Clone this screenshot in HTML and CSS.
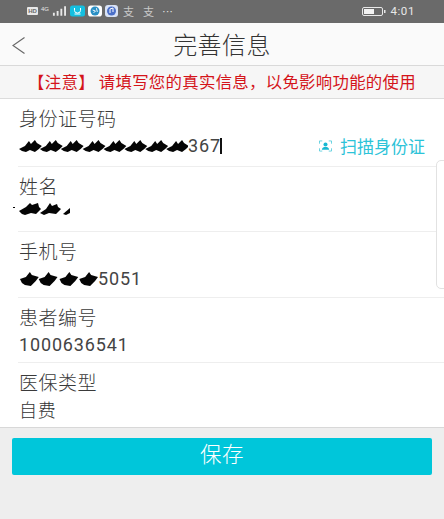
FILE: index.html
```html
<!DOCTYPE html>
<html lang="zh-CN">
<head>
<meta charset="utf-8">
<title>完善信息</title>
<link rel="stylesheet" href="styles.css">
</head>
<body>
<div class="screen">
  <div class="status">
    <div class="status-left">
      <span class="hd">HD</span>
      <span class="net">4G</span>
      <svg class="signal" width="14" height="10" viewBox="0 0 15 10"><path d="M1 7h2v3H1zM5 5h2v5H5zM9 2.500h2V10H9zM13 0h2v10h-2z" fill="#e8e8e8"/></svg>
      <svg class="app" width="15" height="12" viewBox="0 0 15 12"><rect width="15" height="11" y=".5" rx="2.500" fill="#14bfe0"/><path d="M4.500 3v2.500a3 2.500 0 0 0 6 0V3M4.500 9h6" stroke="#fff" stroke-width="1" fill="none"/></svg>
      <svg class="app" width="14" height="12" viewBox="0 0 15 12"><rect width="15" height="12" rx="3" fill="#fff"/><circle cx="7.500" cy="6" r="4.800" fill="#2a8fc4"/><path d="M5 5l3 1-2 2M9 3l1 4" stroke="#fff" stroke-width="1" fill="none"/></svg>
      <svg class="app" width="13" height="12" viewBox="0 0 13 12"><rect width="13" height="12" rx="3" fill="#d9e2f5"/><circle cx="6.500" cy="6" r="4.500" fill="#4a6fc8"/><path d="M5 8V4l3-1v4" stroke="#fff" stroke-width="1" fill="none"/></svg>
      <span class="mini">支</span>
      <span class="mini">支</span>
      <span class="dots">···</span>
    </div>
    <div class="status-right">
      <svg width="24" height="9" viewBox="0 0 24 9"><rect x=".5" y=".5" width="20" height="8" rx="1.500" fill="none" stroke="#e8e8e8"/><rect x="2" y="2" width="10" height="5" fill="#f2f2f2"/><rect x="22" y="3" width="1.500" height="3" fill="#e8e8e8"/></svg>
      <span class="time">4:01</span>
    </div>
  </div>

  <header class="nav">
    <svg class="back" width="13" height="17" viewBox="0 0 13 17"><path d="M12.500.5 1 8.500 12.500 16.500" fill="none" stroke="#666" stroke-width="1.100"/></svg>
    <h1>完善信息</h1>
  </header>

  <p class="notice">【注意】 请填写您的真实信息，以免影响功能的使用</p>

  <main class="form">
    <section class="row row-first">
      <div class="label">身份证号码</div>
      <div class="value">
        <svg class="mask mask-id" width="169" height="14" viewBox="0 0 170 14">
          <defs><path id="blot" d="M0 10 6 7 10 2 12 5 16 1 18 4 23 7 20 10 16 13 11 11 7 13 3 12Z" fill="#050505"/></defs>
          <use href="#blot"/><use href="#blot" x="21"/><use href="#blot" x="42"/><use href="#blot" x="64"/><use href="#blot" x="85"/><use href="#blot" x="106"/><use href="#blot" x="127"/><use href="#blot" x="148"/>
        </svg>
        <span>367</span><span class="caret"></span>
      </div>
      <div class="scan">
        <svg width="15" height="12" viewBox="0 0 15 13"><path d="M1 4V1h3M11 1h3v3M1 9v3h3M11 12h3V9" fill="none" stroke="#3cc4d8" stroke-width=".8"/><circle cx="7.500" cy="4.800" r="2.200" fill="#17b8d2"/><path d="M3.500 10.500c.5-2.500 2-3 4-3s3.500.5 4 3z" fill="#17b8d2"/></svg>
        <span>扫描身份证</span>
      </div>
    </section>

    <section class="row">
      <div class="label">姓名</div>
      <div class="value value-name">
        <svg class="mask" width="58" height="14" viewBox="0 0 58 14">
          <path d="M0 5h2v1H0ZM6 9 13 5 17 1 19 3 22 2 25 1 26 5 28 7 23 12 18 11 12 13 9 12Z" fill="#050505"/>
          <path d="M27 11 33 7 37 1 39 4 44 2 45 5 48 7 43 12 36 11 31 13Z" fill="#050505"/>
          <path d="M50 12 57 6 57 11 53 13Z" fill="#050505"/>
        </svg>
      </div>
    </section>

    <section class="row">
      <div class="label">手机号</div>
      <div class="value">
        <svg class="mask" width="79" height="16" viewBox="0 0 80 16">
          <defs><path id="blot2" d="M1 8 7 6 11 1 13 4 20 6 17 10 12 15 6 14 3 12Z" fill="#050505"/></defs>
          <use href="#blot2"/><use href="#blot2" x="19"/><use href="#blot2" x="40"/><use href="#blot2" x="60"/>
        </svg>
        <span>5051</span>
      </div>
    </section>

    <section class="row">
      <div class="label">患者编号</div>
      <div class="value">1000636541</div>
    </section>

    <section class="row row-last">
      <div class="label">医保类型</div>
      <div class="value value-cjk">自费</div>
    </section>

    <div class="side-tab"></div>
  </main>

  <div class="actions">
    <button class="save" type="button">保存</button>
  </div>
</div>
</body>
</html>
```
FILE: styles.css
```css
* { box-sizing: border-box; }
html, body { margin: 0; padding: 0; }
body {
  width: 444px;
  height: 519px;
  overflow: hidden;
  font-family: "Noto Sans CJK SC", "Liberation Sans", sans-serif;
  background: #eeeeee;
}
.screen { display: flex; flex-direction: column; height: 519px; }

.status {
  height: 23px;
  background: #6a6a6a;
  display: flex;
  align-items: center;
  justify-content: space-between;
  padding: 0 29px 1px 27px;
  color: #e8e8e8;
}
.status-left, .status-right { display: flex; align-items: center; }
.status-left { gap: 3px; }
.status-right { gap: 4px; }
.hd {
  width: 11px;
  height: 8px;
  background: #e8e8e8;
  color: #6a6a6a;
  border-radius: 1px;
  font: bold 6px/8px "Liberation Sans", sans-serif;
  text-align: center;
}
.net { font: 6px/10px "Liberation Sans", sans-serif; width: 10px; margin: -4px -2px 0 0; }
.signal { margin-right: 1px; }
.mini { font-size: 11px; line-height: 12px; margin-left: 2px; width: 15px; opacity: .75; }
.dots { font: 11px/12px "Liberation Sans", sans-serif; margin-left: 1px; }
.time { font: 11.500px/12px "Roboto", "Liberation Sans", sans-serif; letter-spacing: .6px; }

.nav {
  height: 43px;
  background: #fafafa;
  border-bottom: 1px solid #d9d9d9;
  display: flex;
  align-items: center;
  justify-content: center;
  position: relative;
}
.nav h1 { margin: 0; font-size: 24px; font-weight: 300; line-height: 30px; color: #333; letter-spacing: .4px; }
.back { position: absolute; left: 12px; top: 14px; }

.notice {
  margin: 0;
  height: 33px;
  background: #f6f6f6;
  border-bottom: 1px solid #dcdcdc;
  color: #d4141a;
  font-size: 16.400px;
  font-weight: 400;
  letter-spacing: .3px;
  line-height: 31px;
  text-align: center;
  white-space: nowrap;
}

.form {
  height: 329px;
  background: #fff;
  border-bottom: 1px solid #d8d8d8;
  padding: 0 0 0 18px;
  position: relative;
}
.row {
  height: 65.400px;
  border-bottom: 1px solid #eeeeee;
  position: relative;
  padding-top: 7px;
}
.row-first { height: 68px; }
.row-last { border-bottom: 0; }
.label { font-size: 19px; font-weight: 300; line-height: 24px; color: #3a3a3a; letter-spacing: .5px; padding-left: 1px; }
.value {
  font: 400 18px/24px "Roboto", "Noto Sans CJK SC", sans-serif;
  color: #444;
  margin-top: 4px;
  padding-left: 1px;
  display: flex;
  align-items: center;
  letter-spacing: .85px;
}
.value-cjk { font-weight: 300; color: #333; margin-top: 5px; }
.mask { flex: none; }
.value-name { margin-left: -6px; }
.caret { width: 2px; height: 16px; background: #111; margin-left: -1px; }

.scan {
  position: absolute;
  right: 19px;
  top: 37px;
  display: flex;
  align-items: center;
  gap: 7px;
  color: #2cc3d8;
  font-size: 17px;
  font-weight: 400;
  line-height: 20px;
}
.side-tab {
  position: absolute;
  right: -6px;
  top: 61px;
  width: 14px;
  height: 129px;
  border: 1px solid #e2e2e2;
  border-radius: 5px;
  background: #fff;
}

.actions { flex: 1; padding: 10px 12px 0; background: #eeeeee; }
.save {
  display: block;
  width: 420px;
  height: 37px;
  border: 0;
  border-radius: 2px;
  background: #00c6da;
  color: #fff;
  font: 300 21.500px/30px "Noto Sans CJK SC", sans-serif;
  padding: 0 0 7px;
  letter-spacing: .5px;
}
```
